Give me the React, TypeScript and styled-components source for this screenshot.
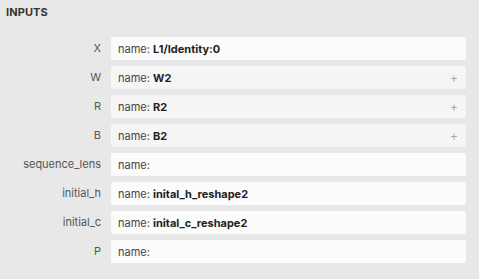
import React from "react";
import styled, { createGlobalStyle } from "styled-components";

const Global = createGlobalStyle`
  html, body { margin: 0; padding: 0; background: #e8e8e8; }
  body { font-family: "Inter", "Liberation Sans", sans-serif; -webkit-font-smoothing: antialiased; }
`;

const Panel = styled.div`
  width: 479px;
  height: 279px;
  box-sizing: border-box;
  background: #e8e8e8;
  padding: 5px 13px 0 6px;
`;

const Title = styled.div`
  font-size: 11px;
  font-weight: 700;
  color: #333;
  line-height: 14px;
  letter-spacing: 0.1px;
`;

const List = styled.div`
  display: grid;
  grid-template-columns: 95px 1fr;
  column-gap: 10px;
  row-gap: 6px;
  margin-top: 18px;
`;

const Label = styled.div`
  text-align: right;
  font-size: 11px;
  color: #555;
  line-height: 23px;
`;

const Field = styled.div<{ $list?: boolean }>`
  height: 23px;
  border-radius: 2px;
  background: ${(p) => (p.$list ? "#f5f5f5" : "#fbfbfb")};
  display: flex;
  align-items: center;
  padding: 0 8px 0 7px;
  font-size: 11px;
  color: #333;
`;

const Key = styled.span`
  color: #444;
  white-space: pre;
`;

const Value = styled.b`
  font-weight: 700;
  color: #222;
`;

const Plus = styled.span`
  margin-left: auto;
  font-size: 12px;
  color: #aaa;
  line-height: 1;
`;

const rows: { label: string; value: string; list?: boolean }[] = [
  { label: "X", value: "L1/Identity:0" },
  { label: "W", value: "W2", list: true },
  { label: "R", value: "R2", list: true },
  { label: "B", value: "B2", list: true },
  { label: "sequence_lens", value: "" },
  { label: "initial_h", value: "inital_h_reshape2" },
  { label: "initial_c", value: "inital_c_reshape2" },
  { label: "P", value: "" },
];

export default function App() {
  return (
    <>
      <Global />
      <Panel>
        <Title>INPUTS</Title>
        <List>
          {rows.map((r) => (
            <React.Fragment key={r.label}>
              <Label>{r.label}</Label>
              <Field $list={r.list}>
                <Key>name: </Key>
                {r.value && <Value>{r.value}</Value>}
                {r.list && <Plus>+</Plus>}
              </Field>
            </React.Fragment>
          ))}
        </List>
      </Panel>
    </>
  );
}
